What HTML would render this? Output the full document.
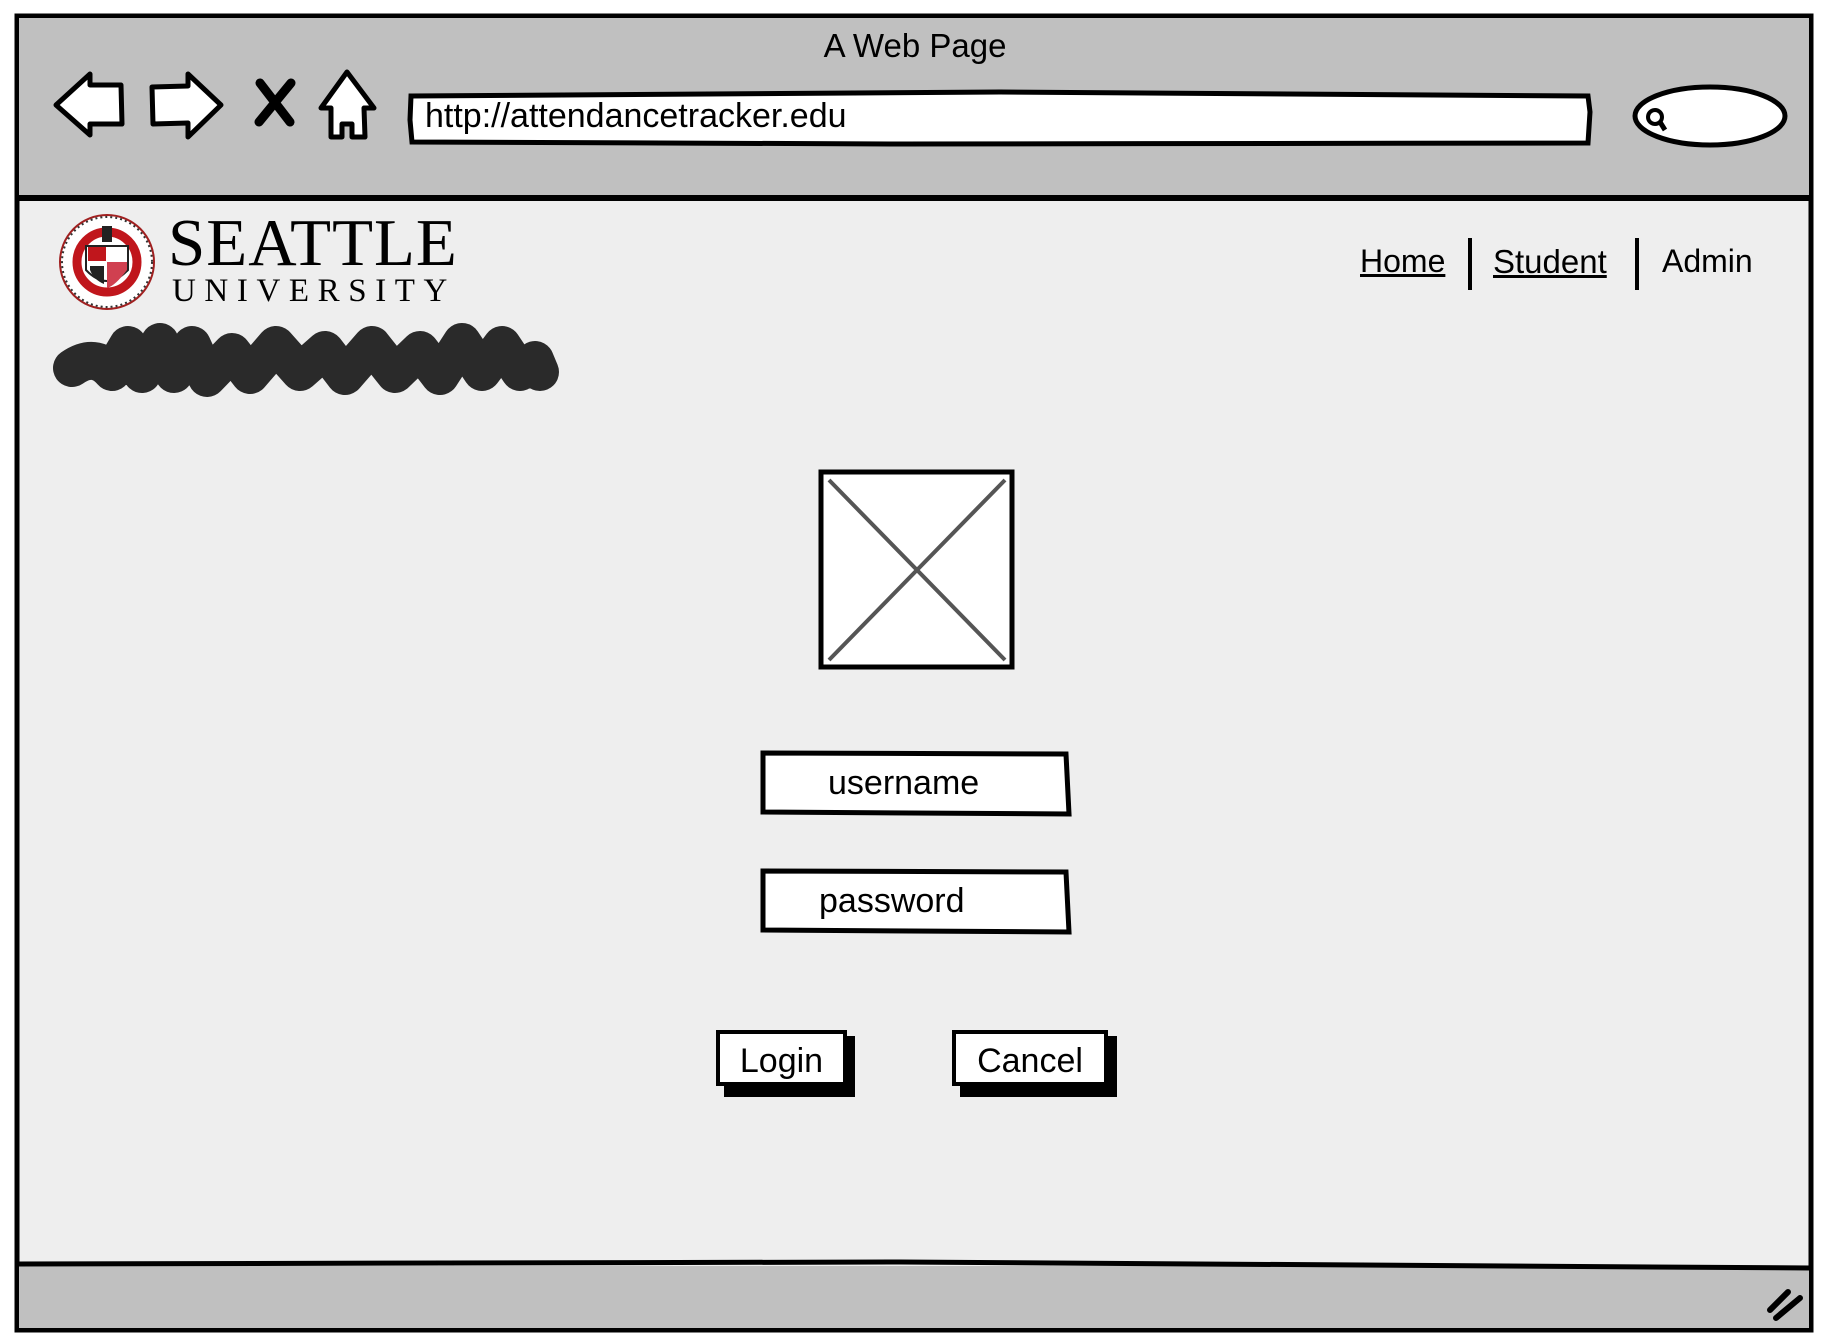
<!DOCTYPE html>
<html><head><meta charset="utf-8"><style>
html,body{margin:0;padding:0;background:#fff;width:1822px;height:1344px;overflow:hidden;position:relative;font-family:"Liberation Sans",sans-serif;}
.a{position:absolute;line-height:1;}
</style></head><body>
<svg class="a" style="left:0;top:0" width="1822" height="1344">
 <rect x="17" y="16" width="1794" height="1314" fill="#eeeeee" stroke="#000" stroke-width="5"/>
 <rect x="19" y="18" width="1790" height="179" fill="#c0c0c0"/>
 <line x1="17" y1="198" x2="1811" y2="198" stroke="#000" stroke-width="6"/>
 <rect x="19" y="1266" width="1790" height="62" fill="#c0c0c0"/>
 <path d="M17 1264 L900 1262 L1811 1268" stroke="#000" stroke-width="5" fill="none"/>
 <path d="M1770 1310 L1788 1292 M1776 1318 L1800 1298" stroke="#000" stroke-width="6" stroke-linecap="round"/>
 <path d="M56 105 L90 74 L90 85 L121 85 L122 124 L90 124 L90 135 Z" fill="#fff" stroke="#000" stroke-width="5" stroke-linejoin="round"/>
 <path d="M221 105 L188 74 L188 86 L152 87 L153 124 L188 123 L188 137 Z" fill="#fff" stroke="#000" stroke-width="5" stroke-linejoin="round"/>
 <path d="M260 83 L290 122 M291 83 L259 122" stroke="#000" stroke-width="9" stroke-linecap="round"/>
 <path d="M347 72 L374 108 L364 108 L365 137 L352 137 L352 124 L342 124 L342 137 L331 137 L331 108 L321 108 Z" fill="#fff" stroke="#000" stroke-width="5" stroke-linejoin="round"/>
 <path d="M411 96 L1000 92 L1588 96 L1590 112 L1588 143 L900 144 L412 142 L410 120 Z" fill="#fff" stroke="#000" stroke-width="5"/>
 <ellipse cx="1710" cy="116" rx="75" ry="29" fill="#fff" stroke="#000" stroke-width="5"/>
 <circle cx="1655" cy="117" r="7" fill="none" stroke="#000" stroke-width="4"/>
 <line x1="1660" y1="122" x2="1665" y2="130" stroke="#000" stroke-width="5"/>
 <circle cx="107" cy="262" r="47" fill="#fff" stroke="#a02020" stroke-width="2"/>
 <circle cx="107" cy="262" r="45" fill="none" stroke="#333" stroke-width="2" stroke-dasharray="2 3"/>
 <circle cx="107" cy="262" r="30" fill="#fff" stroke="#c0161c" stroke-width="9"/>
 <path d="M86 246 L128 246 L128 270 Q107 292 86 270 Z" fill="#fff" stroke="#222" stroke-width="2"/>
 <rect x="88" y="247" width="18" height="14" fill="#c0161c"/>
 <path d="M107 262 L127 262 L127 270 Q115 286 107 288 Z" fill="#d04050"/>
 <path d="M90 266 L104 266 L104 284 Q94 280 90 270Z" fill="#222"/>
 <rect x="102" y="226" width="10" height="16" fill="#222"/>
 <path d="M72 368 Q95 352 112 372 L128 345 L142 374 L160 342 L174 374 L192 345 L207 378 L232 352 L250 375 L276 345 L300 372 L325 350 L345 376 L372 345 L395 374 L420 350 L440 376 L462 342 L482 372 L502 345 L520 372 L535 360 L540 372" fill="none" stroke="#2a2a2a" stroke-width="38" stroke-linejoin="round" stroke-linecap="round"/>
 <line x1="1470" y1="238" x2="1470" y2="290" stroke="#000" stroke-width="4"/>
 <line x1="1637" y1="238" x2="1637" y2="290" stroke="#000" stroke-width="4"/>
 <rect x="821" y="472" width="191" height="195" fill="#fff" stroke="#000" stroke-width="5"/>
 <path d="M829 480 L1005 660 M1005 480 L829 660" stroke="#555" stroke-width="4"/>
 <path d="M763 753 L1066 754 L1069 814 L763 812 Z" fill="#fff" stroke="#000" stroke-width="5"/>
 <path d="M763 871 L1066 872 L1069 932 L763 930 Z" fill="#fff" stroke="#000" stroke-width="5"/>
 <rect x="724" y="1036" width="131" height="61" fill="#000"/>
 <rect x="718" y="1032" width="127" height="52" fill="#fff" stroke="#000" stroke-width="4"/>
 <rect x="960" y="1036" width="157" height="61" fill="#000"/>
 <rect x="954" y="1032" width="152" height="52" fill="#fff" stroke="#000" stroke-width="4"/>
</svg>
<div class="a" style="left:0;width:1830px;top:29px;text-align:center;font-size:33px;">A Web Page</div>
<div class="a" style="left:425px;top:99px;font-size:34px;">http://attendancetracker.edu</div>
<div class="a" style="left:168px;top:210px;font-family:'Liberation Serif',serif;font-size:67px;letter-spacing:1px;">SEATTLE</div>
<div class="a" style="left:172px;top:275px;font-family:'Liberation Serif',serif;font-size:33px;letter-spacing:8.6px;">UNIVERSITY</div>
<div class="a" style="left:1360px;top:245px;font-size:32px;text-decoration:underline;">Home</div>
<div class="a" style="left:1493px;top:245px;font-size:33px;text-decoration:underline;">Student</div>
<div class="a" style="left:1662px;top:245px;font-size:32px;">Admin</div>
<div class="a" style="left:828px;top:766px;font-size:34px;">username</div>
<div class="a" style="left:819px;top:884px;font-size:34px;">password</div>
<div class="a" style="left:718px;top:1044px;width:127px;text-align:center;font-size:34px;">Login</div>
<div class="a" style="left:954px;top:1044px;width:152px;text-align:center;font-size:34px;">Cancel</div>
</body></html>
